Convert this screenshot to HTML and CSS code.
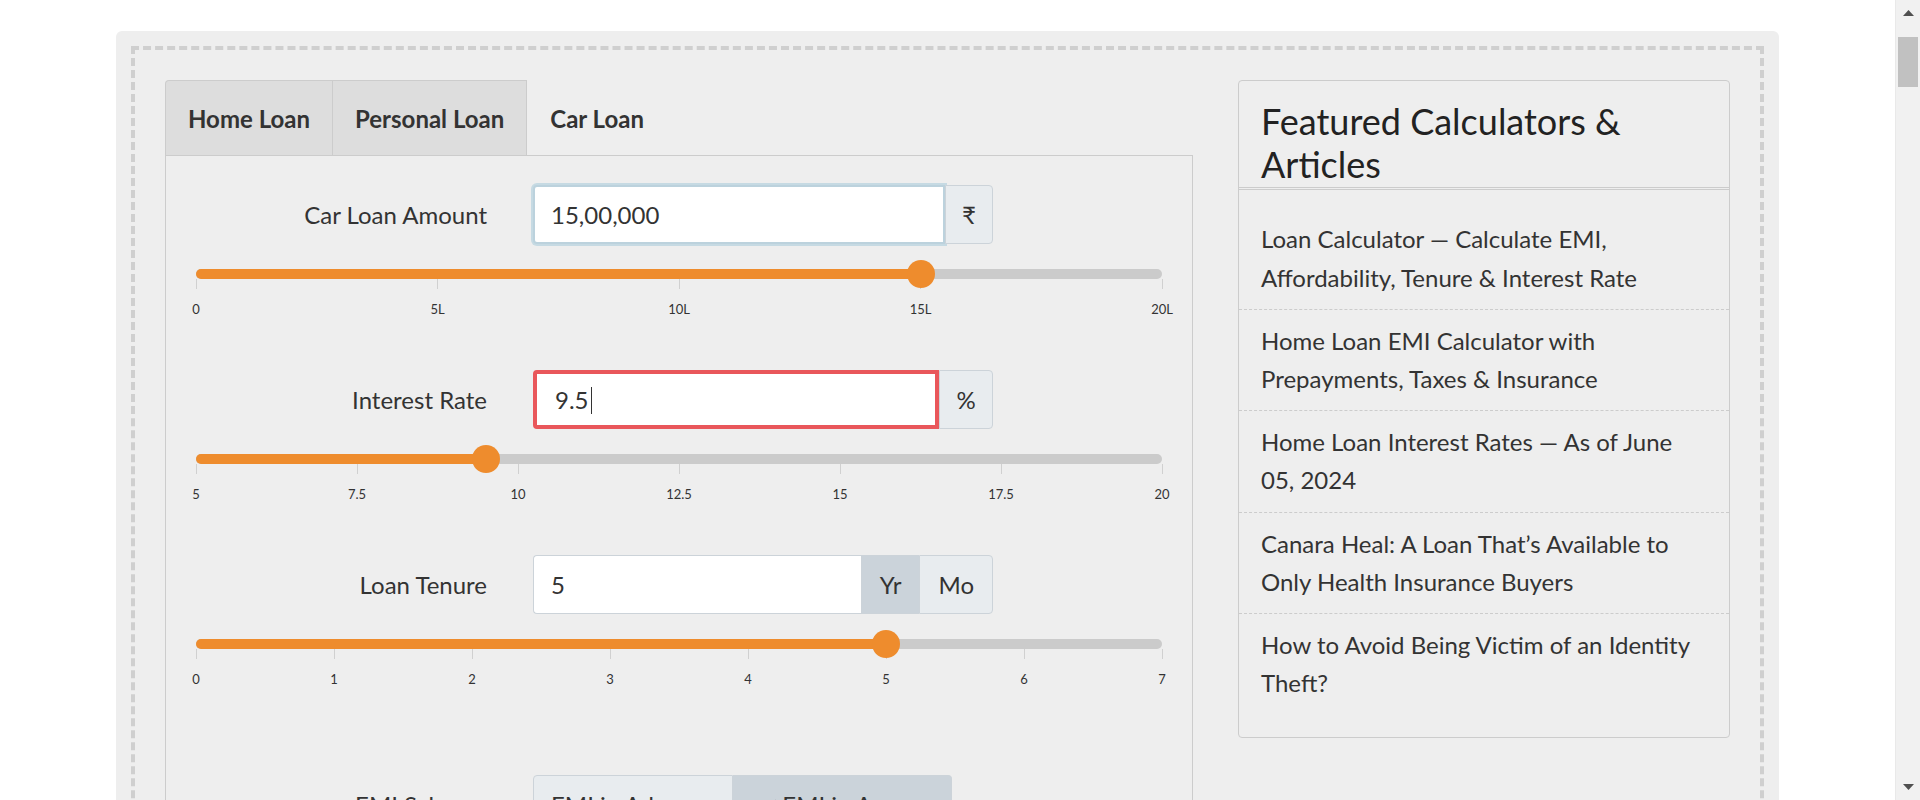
FILE: index.html
```html
<!DOCTYPE html>
<html lang="en">
<head>
<meta charset="utf-8">
<title>Car Loan EMI Calculator</title>
<link rel="stylesheet" href="styles.css">
</head>
<body>
<div class="calc-box">
  <div class="calc-inner">
    <div class="calc-main">
      <ul class="tabs">
        <li class="tab tab-first">Home Loan</li>
        <li class="tab tab-next">Personal Loan</li>
        <li class="tab active">Car Loan</li>
      </ul>
      <div class="tab-panel">
        <div class="field">
          <div class="field-row">
            <label class="field-label">Car Loan Amount</label>
            <div class="input-group">
              <input class="form-input focused" type="text" value="15,00,000">
              <span class="addon addon-rupee">₹</span>
            </div>
          </div>
          <div class="track"><div class="fill" style="width:75%"></div><span class="handle" style="left:75%"></span></div>
          <div class="scale">
            <span class="tick"><i></i><b>0</b></span>
            <span class="tick"><i></i><b>5L</b></span>
            <span class="tick"><i></i><b>10L</b></span>
            <span class="tick"><i></i><b>15L</b></span>
            <span class="tick"><i></i><b>20L</b></span>
          </div>
        </div>

        <div class="field">
          <div class="field-row">
            <label class="field-label">Interest Rate</label>
            <div class="input-group">
              <span class="input-wrap">
                <input class="form-input invalid" type="text" value="9.5">
                <span class="caret"></span>
              </span>
              <span class="addon addon-percent">%</span>
            </div>
          </div>
          <div class="track"><div class="fill" style="width:30%"></div><span class="handle" style="left:30%"></span></div>
          <div class="scale">
            <span class="tick"><i></i><b>5</b></span>
            <span class="tick"><i></i><b>7.5</b></span>
            <span class="tick"><i></i><b>10</b></span>
            <span class="tick"><i></i><b>12.5</b></span>
            <span class="tick"><i></i><b>15</b></span>
            <span class="tick"><i></i><b>17.5</b></span>
            <span class="tick"><i></i><b>20</b></span>
          </div>
        </div>

        <div class="field field-last">
          <div class="field-row">
            <label class="field-label">Loan Tenure</label>
            <div class="input-group">
              <input class="form-input" type="text" value="5">
              <span class="addon addon-mid active">Yr</span>
              <span class="addon">Mo</span>
            </div>
          </div>
          <div class="track"><div class="fill" style="width:71.43%"></div><span class="handle" style="left:71.43%"></span></div>
          <div class="scale">
            <span class="tick"><i></i><b>0</b></span>
            <span class="tick"><i></i><b>1</b></span>
            <span class="tick"><i></i><b>2</b></span>
            <span class="tick"><i></i><b>3</b></span>
            <span class="tick"><i></i><b>4</b></span>
            <span class="tick"><i></i><b>5</b></span>
            <span class="tick"><i></i><b>6</b></span>
            <span class="tick"><i></i><b>7</b></span>
          </div>
        </div>

        <div class="field-row">
          <label class="field-label">EMI Scheme</label>
          <div class="btn-group">
            <span class="btn">EMI in Advance</span>
            <span class="btn active"><svg class="check" viewBox="0 0 16 16" width="16" height="16"><path d="M2 8.5l4 4 8-9" fill="none" stroke="#333" stroke-width="2.2"/></svg>EMI in Arrears</span>
          </div>
        </div>
      </div>
    </div>

    <aside class="side-card">
      <h3 class="side-title">Featured Calculators &amp; Articles</h3>
      <ul class="side-list">
        <li><a href="#">Loan Calculator — Calculate EMI, Affordability, Tenure &amp; Interest Rate</a></li>
        <li><a href="#">Home Loan EMI Calculator with Prepayments, Taxes &amp; Insurance</a></li>
        <li><a href="#">Home Loan Interest Rates — As of June 05, 2024</a></li>
        <li><a href="#">Canara Heal: A Loan That’s Available to Only Health Insurance Buyers</a></li>
        <li><a href="#">How to Avoid Being Victim of an Identity Theft?</a></li>
      </ul>
    </aside>
  </div>
</div>

<div class="scrollbar" aria-hidden="true">
  <svg class="scroll-arrow" viewBox="0 0 11 6" width="11" height="6"><path d="M0 6L5.5 0L11 6z" fill="#505050"/></svg>
  <div class="scroll-track"><div class="scroll-thumb"></div></div>
  <svg class="scroll-arrow" viewBox="0 0 11 6" width="11" height="6"><path d="M0 0L5.5 6L11 0z" fill="#505050"/></svg>
</div>
</body>
</html>
```
FILE: styles.css
```css
html, body {
  margin: 0;
  padding: 0;
  background: #fff;
}

body {
  font-family: Lato, "Noto Sans", "DejaVu Sans", sans-serif;
  color: #333;
}

/* Window scrollbar (drawn over the page edge) */
.scrollbar {
  position: fixed;
  top: 0;
  right: 0;
  width: 25px;
  height: 100vh;
  display: flex;
  flex-direction: column;
  align-items: center;
  background: #f1f1f1;
  border-left: 1px solid #e9e9e9;
  box-sizing: border-box;
}

.scroll-arrow {
  flex: none;
  margin: 10px 0;
}

.scroll-track {
  flex: 1;
  align-self: stretch;
  padding: 11px 2px 0 2px;
}

.scroll-thumb {
  height: 50px;
  background: #c1c1c1;
}

.calc-box {
  box-sizing: border-box;
  width: 1663px;
  margin: 31px 0 0 116px;
  padding: 15px;
  background: #eeeeee;
  border-radius: 6px;
}

.calc-inner {
  display: grid;
  grid-template-columns: 1028px 492px;
  column-gap: 45px;
  align-items: start;
  padding: 30px;
  border: 4px dashed #cfcfcf;
}

/* Tabs */
.tabs {
  display: flex;
  margin: 0;
  padding: 0;
  list-style: none;
}

.tab {
  padding: 0 22px;
  height: 74px;
  line-height: 76px;
  font-size: 24px;
  font-weight: 700;
  color: #333;
  background: #dddddd;
  border: 1px solid #cccccc;
  border-bottom: 0;
}

.tab-first {
  border-radius: 4px 0 0 0;
}

.tab-next {
  border-left: 0;
}

.tab.active {
  background: transparent;
  border-color: transparent;
}

.tab-panel {
  border: 1px solid #cccccc;
  padding: 29px 30px 30px;
  min-height: 11400px;
}

/* Form rows */
.field {
  margin-bottom: 53px;
}

.field-last {
  margin-bottom: 88px;
}

.field-row {
  display: flex;
  align-items: center;
}

.field-label {
  width: 291px;
  margin-right: 46px;
  text-align: right;
  font-size: 24px;
  color: #333;
}

.input-group {
  display: flex;
  width: 460px;
  height: 59px;
}

.input-wrap {
  position: relative;
  display: flex;
  flex: 1;
  min-width: 0;
}

.form-input {
  flex: 1;
  min-width: 0;
  width: 100%;
  box-sizing: border-box;
  height: 59px;
  margin: 0;
  padding: 0 17px;
  font-family: Lato, "Noto Sans", sans-serif;
  font-size: 24px;
  color: #333;
  background: #fff;
  border: 1px solid #ccd3d9;
  border-right: 0;
  border-radius: 4px 0 0 4px;
  outline: none;
}

.form-input.focused {
  border: 2px solid #bcd2dd;
  box-shadow: 0 0 0 2px #c6dae3;
  border-radius: 4px 0 0 4px;
  padding-left: 16px;
}

.form-input.invalid {
  border: 4px solid #e9575b;
  border-radius: 4px 0 0 4px;
  padding-left: 18px;
}

.caret {
  position: absolute;
  left: 58px;
  top: 17px;
  width: 1px;
  height: 27px;
  background: #333;
}

.addon {
  display: flex;
  align-items: center;
  justify-content: center;
  box-sizing: border-box;
  padding: 0 18px;
  font-size: 24px;
  color: #333;
  background: #e8ecef;
  border: 1px solid #ccd3d9;
  border-radius: 0 4px 4px 0;
}

.addon-rupee {
  width: 48px;
  padding: 0;
}

.addon-percent {
  width: 54px;
  padding: 0;
}

.addon-mid {
  border-right: 0;
  border-radius: 0;
}

.addon.active {
  background: #cbd3da;
}

/* Sliders */
.track {
  position: relative;
  height: 10px;
  margin-top: 25px;
  background: #cbcbcb;
  border-radius: 5px;
}

.fill {
  height: 100%;
  background: #ee8c2d;
  border-radius: 5px 0 0 5px;
}

.handle {
  position: absolute;
  top: 50%;
  width: 28px;
  height: 28px;
  margin: -14px 0 0 -14px;
  border-radius: 50%;
  background: #ee8c2d;
}

.scale {
  display: flex;
  justify-content: space-between;
}

.tick {
  display: flex;
  flex-direction: column;
  align-items: center;
  width: 0;
}

.tick i {
  display: block;
  width: 1px;
  height: 10px;
  background: #d0d0d0;
}

.tick b {
  margin-top: 12px;
  font-size: 13px;
  line-height: 16px;
  font-weight: 400;
  white-space: nowrap;
  color: #333;
}

/* Button group */
.btn-group {
  display: flex;
  height: 59px;
}

.btn {
  display: flex;
  align-items: center;
  padding: 0 17px;
  font-size: 24px;
  color: #333;
  background: #e8ecef;
  border: 1px solid #ccd3d9;
  border-radius: 4px 0 0 4px;
}

.btn.active {
  background: #cbd3da;
  border-left: 0;
  border-radius: 0 4px 4px 0;
  padding-left: 29px;
  padding-right: 18px;
}

.check {
  margin-right: 4px;
}

/* Sidebar */
.side-card {
  border: 1px solid #cccccc;
  border-radius: 4px;
}

.side-title {
  margin: 0;
  padding: 19px 22px 1px;
  font-size: 36px;
  font-weight: 400;
  line-height: 1.2;
  color: #222;
  border-bottom: 3px double #cccccc;
}

.side-list {
  list-style: none;
  margin: 0;
  padding: 18px 0 23px;
}

.side-list li {
  padding: 12px 22px;
  font-size: 24px;
  line-height: 38.2px;
  border-bottom: 1px dashed #cccccc;
}

.side-list li:last-child {
  border-bottom: 0;
}

.side-list a {
  color: #333;
  text-decoration: none;
}
```
